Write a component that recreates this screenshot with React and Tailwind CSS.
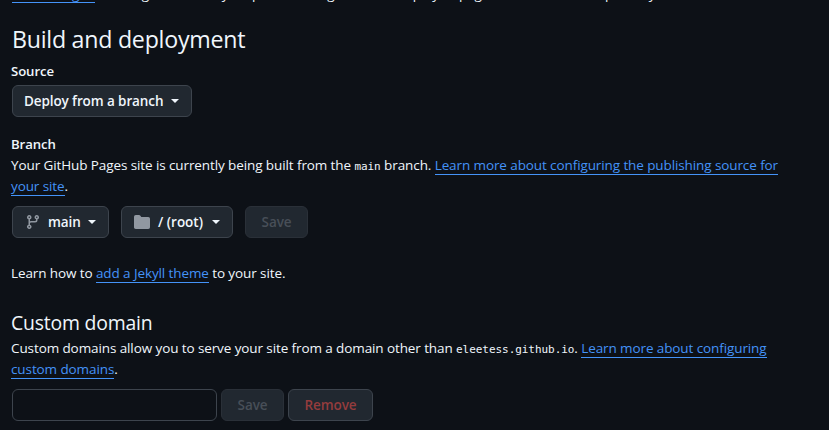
import React from "react";

function Link({ children, className = "" }) {
  return (
    <a className={`border-b border-[#4493f8] text-[#4493f8] ${className}`} href="#">
      {children}
    </a>
  );
}

function Caret({ className = "ml-[7.5px]" }) {
  return (
    <svg className={`shrink-0 ${className}`} width="8" height="4" viewBox="0 0 8 4" fill="currentColor">
      <path d="M0 0h8L4 4z" />
    </svg>
  );
}

function Button({ children, className = "", tone = "border-[#3d444d] text-[#f0f6fc]" }) {
  return (
    <button
      className={`flex h-8 shrink-0 items-center rounded-md border bg-[#212830] font-semibold whitespace-nowrap ${tone} ${className}`}
    >
      {children}
    </button>
  );
}

function BranchIcon() {
  return (
    <svg className="mr-[7px] shrink-0" width="16" height="16" viewBox="0 0 16 16" fill="#9198a1">
      <path d="M9.5 3.25a2.25 2.25 0 1 1 3 2.122V6A2.5 2.5 0 0 1 10 8.5H6a1 1 0 0 0-1 1v1.128a2.251 2.251 0 1 1-1.5 0V5.372a2.25 2.25 0 1 1 1.5 0v1.836A2.493 2.493 0 0 1 6 7h4a1 1 0 0 0 1-1v-.628A2.25 2.25 0 0 1 9.5 3.25Zm-6 0a.75.75 0 1 0 1.5 0 .75.75 0 0 0-1.5 0Zm8.25-.75a.75.75 0 1 0 0 1.5.75.75 0 0 0 0-1.5ZM4.25 12a.75.75 0 1 0 0 1.5.75.75 0 0 0 0-1.5Z" />
    </svg>
  );
}

function FolderIcon() {
  return (
    <svg className="mr-2 shrink-0" width="16" height="16" viewBox="0 0 16 16" fill="#9198a1">
      <path d="M1.75 1A1.75 1.75 0 0 0 0 2.75v10.5C0 14.216.784 15 1.75 15h12.5A1.75 1.75 0 0 0 16 13.25v-8.5A1.75 1.75 0 0 0 14.25 3H7.5a.25.25 0 0 1-.2-.1l-.9-1.2C6.07 1.26 5.55 1 5 1H1.75Z" />
    </svg>
  );
}

function Code({ children }) {
  return (
    <code className="font-['DejaVu_Sans_Mono',monospace] text-[11px] leading-none tracking-[-0.05px]">{children}</code>
  );
}

const disabled = "border-[#2a3038] text-[#484f58]";

export default function App() {
  return (
    <main className="h-[430px] overflow-hidden bg-[#0d1117] pl-3 font-['Open_Sans','Noto_Sans',sans-serif] text-[13.5px] leading-[21px] tracking-[-0.1px] whitespace-nowrap text-[#f0f6fc]">
      <p className="-mt-4 flex h-[21px]">
        <Link className="mr-1 h-[19px] w-[83px]">site settings</Link>
        <span className="w-[103px]">or using the new</span>
        <span className="w-[50px]">may be</span>
        <span className="w-[48px]">publish</span>
        <span className="w-[97px]">being will then</span>
        <span className="w-[62px]">deploy to</span>
        <span className="w-[133px]">pages from the</span>
        <span>repository.</span>
      </p>

      <h2 className="mt-[18px] h-[38px] text-[23.2px] leading-8 tracking-[-0.25px]">Build and deployment</h2>
      <h3 className="-ml-px h-[21px] text-[13.2px] font-semibold">Source</h3>
      <Button className="mt-[3px] w-[180px] pl-[11px]">
        Deploy from a branch
        <Caret />
      </Button>

      <h3 className="mt-[17px] -ml-px h-[21px] text-[13.2px] font-semibold">Branch</h3>
      <p className="-ml-px">
        Your GitHub Pages site is currently being built from the <Code>main</Code> branch.{" "}
        <Link>Learn more about configuring the publishing source for</Link>
        <br />
        <Link>your site</Link>.
      </p>
      <div className="mt-[9px] flex">
        <Button className="w-[97px] pl-3">
          <BranchIcon />
          main
          <Caret />
        </Button>
        <Button className="ml-3 w-28 pl-3">
          <FolderIcon />
          <span className="tracking-normal">/ (root)</span>
          <Caret className="ml-[9px]" />
        </Button>
        <Button className="ml-3 w-[63px] justify-center" tone={disabled}>
          Save
        </Button>
      </div>
      <p className="mt-[25px] -ml-px">
        Learn how to <Link>add a Jekyll theme</Link> to your site.
      </p>

      <h2 className="mt-[25px] -ml-px h-[29px] text-[19.4px] leading-7 tracking-[-0.2px]">Custom domain</h2>
      <p className="-ml-px">
        Custom domains allow you to serve your site from a domain other than <Code>eleetess.github.io</Code>.{" "}
        <Link>Learn more about configuring</Link>
        <br />
        <Link>custom domains</Link>.
      </p>
      <div className="mt-[9px] flex gap-1">
        <input className="h-8 w-[205px] rounded-md border border-[#3d444d] bg-[#0d1117] px-3 outline-none" />
        <Button className="w-[63px] justify-center" tone={disabled}>
          Save
        </Button>
        <Button className="w-[85px] justify-center" tone="border-[#3d444d] text-[#943c3d]">
          Remove
        </Button>
      </div>
    </main>
  );
}
